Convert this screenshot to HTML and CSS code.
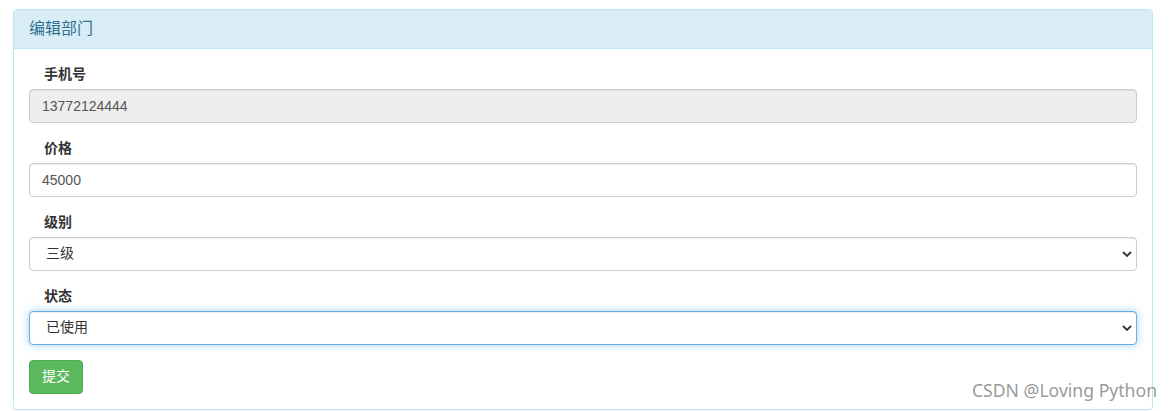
FILE: index.html
```html
<!DOCTYPE html>
<html lang="zh">
<head>
<meta charset="utf-8">
<title>编辑部门</title>
<link rel="stylesheet" href="styles.css">
</head>
<body>
<div class="panel">
  <div class="panel-heading">编辑部门</div>
  <div class="panel-body">
    <form>
      <div class="form-group">
        <label class="control-label">手机号</label>
        <input class="form-control" type="text" value="13772124444" disabled>
      </div>
      <div class="form-group">
        <label class="control-label">价格</label>
        <input class="form-control" type="text" value="45000">
      </div>
      <div class="form-group">
        <label class="control-label">级别</label>
        <div class="select-wrap">
          <select class="form-control select">
            <option>三级</option>
          </select>
          <svg class="chev" viewBox="0 0 10 6" width="10" height="6"><path d="M1 1 L5 5 L9 1" fill="none" stroke="#333" stroke-width="1.8"/></svg>
        </div>
      </div>
      <div class="form-group">
        <label class="control-label">状态</label>
        <div class="select-wrap">
          <select class="form-control select focused">
            <option>已使用</option>
          </select>
          <svg class="chev" viewBox="0 0 10 6" width="10" height="6"><path d="M1 1 L5 5 L9 1" fill="none" stroke="#333" stroke-width="1.8"/></svg>
        </div>
      </div>
      <button type="button" class="btn btn-success">提交</button>
    </form>
  </div>
</div>
<div class="watermark">CSDN @Loving Python</div>
</body>
</html>
```
FILE: styles.css
```css
* { box-sizing: border-box; }
html, body { margin: 0; padding: 0; background: #fff; }
body {
  font-family: "Liberation Sans", Arial, "Noto Sans CJK SC", sans-serif;
  font-size: 14px;
  line-height: 1.42857;
  color: #333;
  padding: 9px 0 0 13px;
  position: relative;
  min-height: 411px;
}
.panel {
  width: 1140px;
  border: 1px solid #bce8f1;
  border-radius: 4px;
  background: #fff;
  box-shadow: 0 1px 1px rgba(0,0,0,.05);
}
.panel-heading {
  background: #d9edf7;
  color: #31708f;
  border-bottom: 1px solid #bce8f1;
  border-radius: 3px 3px 0 0;
  padding: 10px 15px;
  font-size: 16px;
  line-height: 18px;
}
.panel-body { padding: 15px; }
.form-group { margin-bottom: 15px; }
.control-label {
  display: block;
  font-weight: bold;
  margin-bottom: 5px;
  padding-left: 15px;
  line-height: 20px;
}
.form-control {
  display: block;
  width: 100%;
  height: 34px;
  padding: 6px 12px;
  font-family: inherit;
  font-size: 14px;
  line-height: 1.42857;
  color: #555;
  background: #fff;
  border: 1px solid #ccc;
  border-radius: 4px;
  box-shadow: inset 0 1px 1px rgba(0,0,0,.075);
  margin: 0;
}
.form-control[disabled] { background: #eee; opacity: 1; color: #555; }
.select-wrap { position: relative; }
.select {
  -webkit-appearance: none;
  appearance: none;
  padding-left: 16px;
  color: #333;
}
.chev { position: absolute; right: 5px; top: 14px; }
.focused {
  border-color: #66afe9;
  box-shadow: inset 0 1px 1px rgba(0,0,0,.075), 0 0 8px rgba(102,175,233,.6);
}
.btn {
  display: inline-block;
  height: 34px;
  padding: 6px 12px;
  font-family: inherit;
  font-size: 14px;
  line-height: 1.42857;
  border: 1px solid transparent;
  border-radius: 4px;
  cursor: pointer;
}
.btn-success { color: #fff; background: #5cb85c; border-color: #4cae4c; }
.watermark {
  position: absolute;
  left: 972px;
  top: 379px;
  font-family: "Noto Sans", "Liberation Sans", sans-serif;
  font-size: 17.6px;
  line-height: 22px;
  color: rgba(125,125,125,.8);
  white-space: nowrap;
}
```
